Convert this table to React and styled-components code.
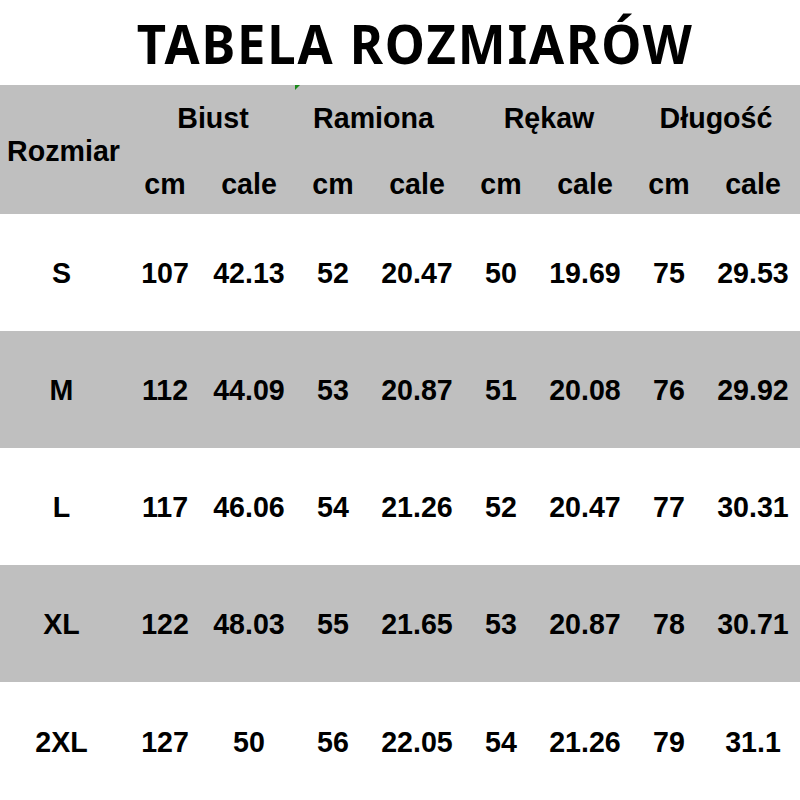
import React from 'react';
import styled, { createGlobalStyle } from 'styled-components';

const GlobalStyle = createGlobalStyle`
  html, body {
    margin: 0;
    padding: 0;
    background: #fff;
  }
  #root {
    width: 800px;
    height: 800px;
    overflow: hidden;
  }
`;

const Page = styled.div`
  width: 800px;
  height: 800px;
  display: flex;
  flex-direction: column;
  background: #fff;
  color: #000;
`;

const Title = styled.h1`
  margin: 0;
  height: 85px;
  display: flex;
  align-items: center;
  justify-content: center;
  padding-left: 30px;
  box-sizing: border-box;
  font-family: 'Noto Sans', 'Open Sans', sans-serif;
  font-weight: 700;
  font-size: 54px;
  letter-spacing: 2px;
  line-height: 1;
`;

const TitleText = styled.span`
  display: inline-block;
  transform: scaleX(0.94);
`;

const Grid = styled.div`
  position: relative;
  display: grid;
  grid-template-columns: 123px repeat(8, 84px) 5px;
  font-family: 'Liberation Sans', Arial, sans-serif;
  font-weight: 700;
  font-size: 28.6px;
`;

const Band = styled.div`
  grid-column: 1 / -1;
  display: grid;
  grid-template-columns: subgrid;
  background: ${(p) => (p.$gray ? '#bfbfbf' : '#fff')};
  height: ${(p) => p.$h}px;
`;

const Header = styled(Band)`
  grid-template-rows: 65px 64px;
`;

const Cell = styled.div`
  display: flex;
  align-items: center;
  justify-content: center;
  white-space: nowrap;
  padding-top: 2px;
`;

const SizeHead = styled(Cell)`
  grid-row: 1 / 3;
  grid-column: 1;
  padding-top: 4px;
  padding-left: 4px;
`;

const Group = styled(Cell)`
  grid-row: 1;
  grid-column: span 2;
  padding-left: ${(p) => Math.max(p.$shift, 0)}px;
  padding-right: ${(p) => Math.max(-p.$shift, 0)}px;
  padding-top: 2px;
`;

const Unit = styled(Cell)`
  grid-row: 2;
  padding-top: 4px;
`;

const Mark = styled.div`
  position: absolute;
  left: 295px;
  top: 0;
  width: 0;
  height: 0;
  border-top: 5px solid #1a8a1a;
  border-right: 5px solid transparent;
`;

const groups = [
  { name: 'Biust', shift: 12 },
  { name: 'Ramiona', shift: -3 },
  { name: 'Rękaw', shift: 12 },
  { name: 'Długość', shift: 10 },
];

const rows = [
  ['S', '107', '42.13', '52', '20.47', '50', '19.69', '75', '29.53'],
  ['M', '112', '44.09', '53', '20.87', '51', '20.08', '76', '29.92'],
  ['L', '117', '46.06', '54', '21.26', '52', '20.47', '77', '30.31'],
  ['XL', '122', '48.03', '55', '21.65', '53', '20.87', '78', '30.71'],
  ['2XL', '127', '50', '56', '22.05', '54', '21.26', '79', '31.1'],
];

export default function App() {
  return (
    <Page>
      <GlobalStyle />
      <Title>
        <TitleText>TABELA ROZMIARÓW</TitleText>
      </Title>
      <Grid>
        <Mark />
        <Header $gray $h={129}>
          <SizeHead>Rozmiar</SizeHead>
          {groups.map((g) => (
            <Group key={g.name} $shift={g.shift}>{g.name}</Group>
          ))}
          {groups.map((g) => (
            <React.Fragment key={g.name}>
              <Unit>cm</Unit>
              <Unit>cale</Unit>
            </React.Fragment>
          ))}
        </Header>
        {rows.map((r, i) => (
          <Band key={r[0]} $gray={i % 2 === 1} $h={i === rows.length - 1 ? 118 : 117}>
            {r.map((v, j) => (
              <Cell key={j}>{v}</Cell>
            ))}
          </Band>
        ))}
      </Grid>
    </Page>
  );
}
